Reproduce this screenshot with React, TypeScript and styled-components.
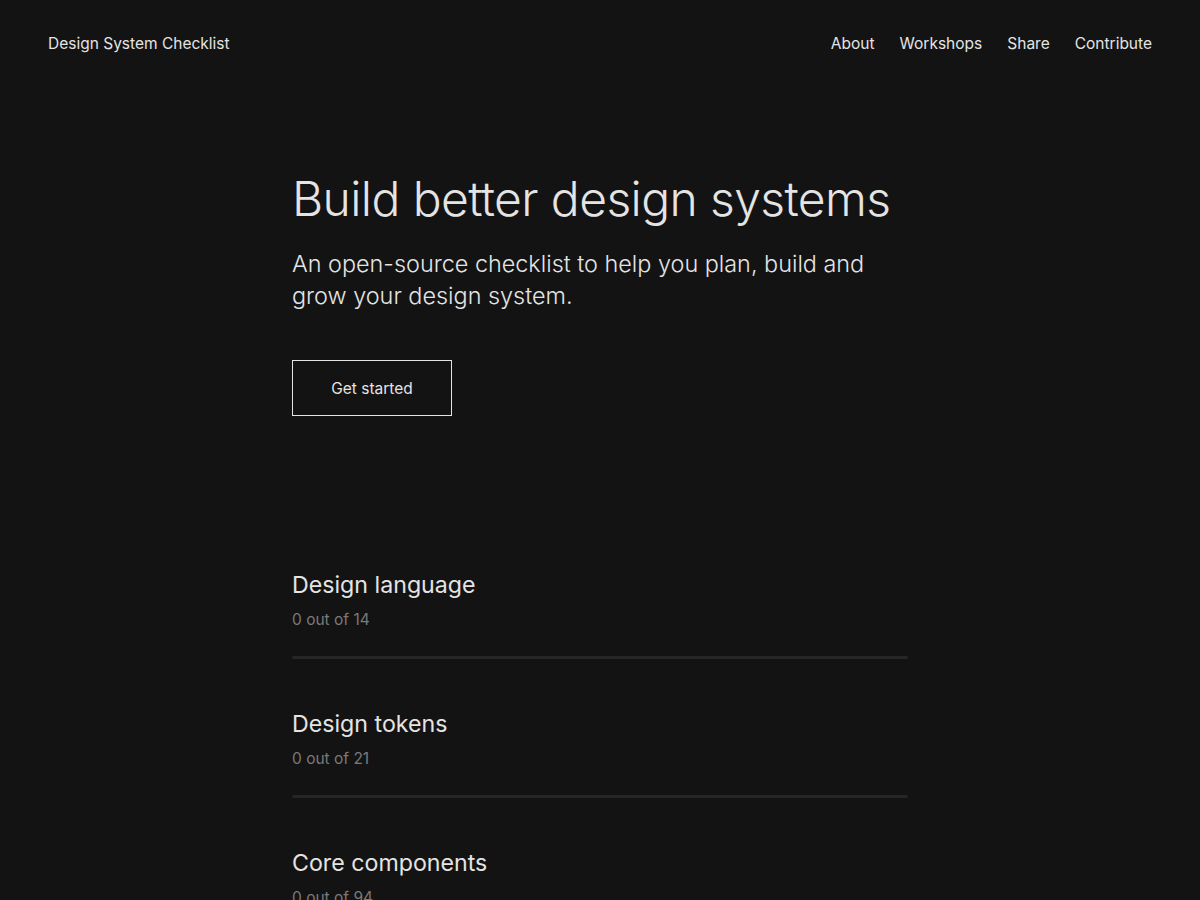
import styled, { createGlobalStyle } from 'styled-components';

const GlobalStyle = createGlobalStyle`
  html, body {
    margin: 0;
    padding: 0;
    background: #131313;
    color: #e4e4e4;
    font-family: Inter, 'Noto Sans', sans-serif;
    -webkit-font-smoothing: antialiased;
  }
  * { box-sizing: border-box; }
`;

const sections = [
  { title: 'Design language', done: 0, total: 14 },
  { title: 'Design tokens', done: 0, total: 21 },
  { title: 'Core components', done: 0, total: 94 },
  { title: 'Documentation', done: 0, total: 12 },
];

export default function App() {
  return (
    <>
      <GlobalStyle />
      <Header>
        <Brand href="#">Design System Checklist</Brand>
        <Nav>
          <NavLink href="#">About</NavLink>
          <NavLink href="#">Workshops</NavLink>
          <NavLink href="#">Share</NavLink>
          <NavLink href="#">Contribute</NavLink>
        </Nav>
      </Header>
      <Main>
        <Hero>
          <Title>Build better design systems</Title>
          <Lead>
            An open-source checklist to help you plan, build and grow your design system.
          </Lead>
          <Button>Get started</Button>
        </Hero>
        <List>
          {sections.map((s) => (
            <Section key={s.title}>
              <SectionTitle>{s.title}</SectionTitle>
              <Count>
                {s.done} out of {s.total}
              </Count>
              <Track>
                <Fill style={{ width: `${(s.done / s.total) * 100}%` }} />
              </Track>
            </Section>
          ))}
        </List>
      </Main>
    </>
  );
}

const Header = styled.header`
  display: flex;
  justify-content: space-between;
  align-items: center;
  padding: 33px 48px 31px;
  font-size: 15.5px;
  line-height: 22px;
`;

const Brand = styled.a`
  color: #e4e4e4;
  text-decoration: none;
`;

const Nav = styled.nav`
  display: flex;
  gap: 25px;
`;

const NavLink = styled.a`
  color: #e4e4e4;
  text-decoration: none;
`;

const Main = styled.main`
  width: 616px;
  margin: 0 auto;
`;

const Hero = styled.section`
  padding-top: 81px;
`;

const Title = styled.h1`
  margin: 0;
  font-size: 48px;
  font-weight: 300;
  line-height: 64px;
  letter-spacing: -0.6px;
`;

const Lead = styled.p`
  margin: 17px 0 0;
  font-size: 23.4px;
  font-weight: 300;
  line-height: 32px;
  max-width: 590px;
`;

const Button = styled.button`
  margin-top: 48px;
  width: 160px;
  height: 56px;
  background: transparent;
  border: 1px solid #e4e4e4;
  color: #e4e4e4;
  font-family: inherit;
  font-size: 15.5px;
  cursor: pointer;
`;

const List = styled.div`
  margin-top: 153px;
  display: flex;
  flex-direction: column;
  gap: 49px;
`;

const Section = styled.div`
  display: flex;
  flex-direction: column;
`;

const SectionTitle = styled.h2`
  margin: 0;
  font-size: 23.2px;
  font-weight: 400;
  line-height: 32px;
`;

const Count = styled.div`
  margin-top: 7px;
  font-size: 15.5px;
  line-height: 24px;
  color: #7a7a7a;
`;

const Track = styled.div`
  margin-top: 24px;
  height: 3px;
  background: #262626;
  border-radius: 2px;
`;

const Fill = styled.div`
  height: 100%;
  background: #e4e4e4;
`;
